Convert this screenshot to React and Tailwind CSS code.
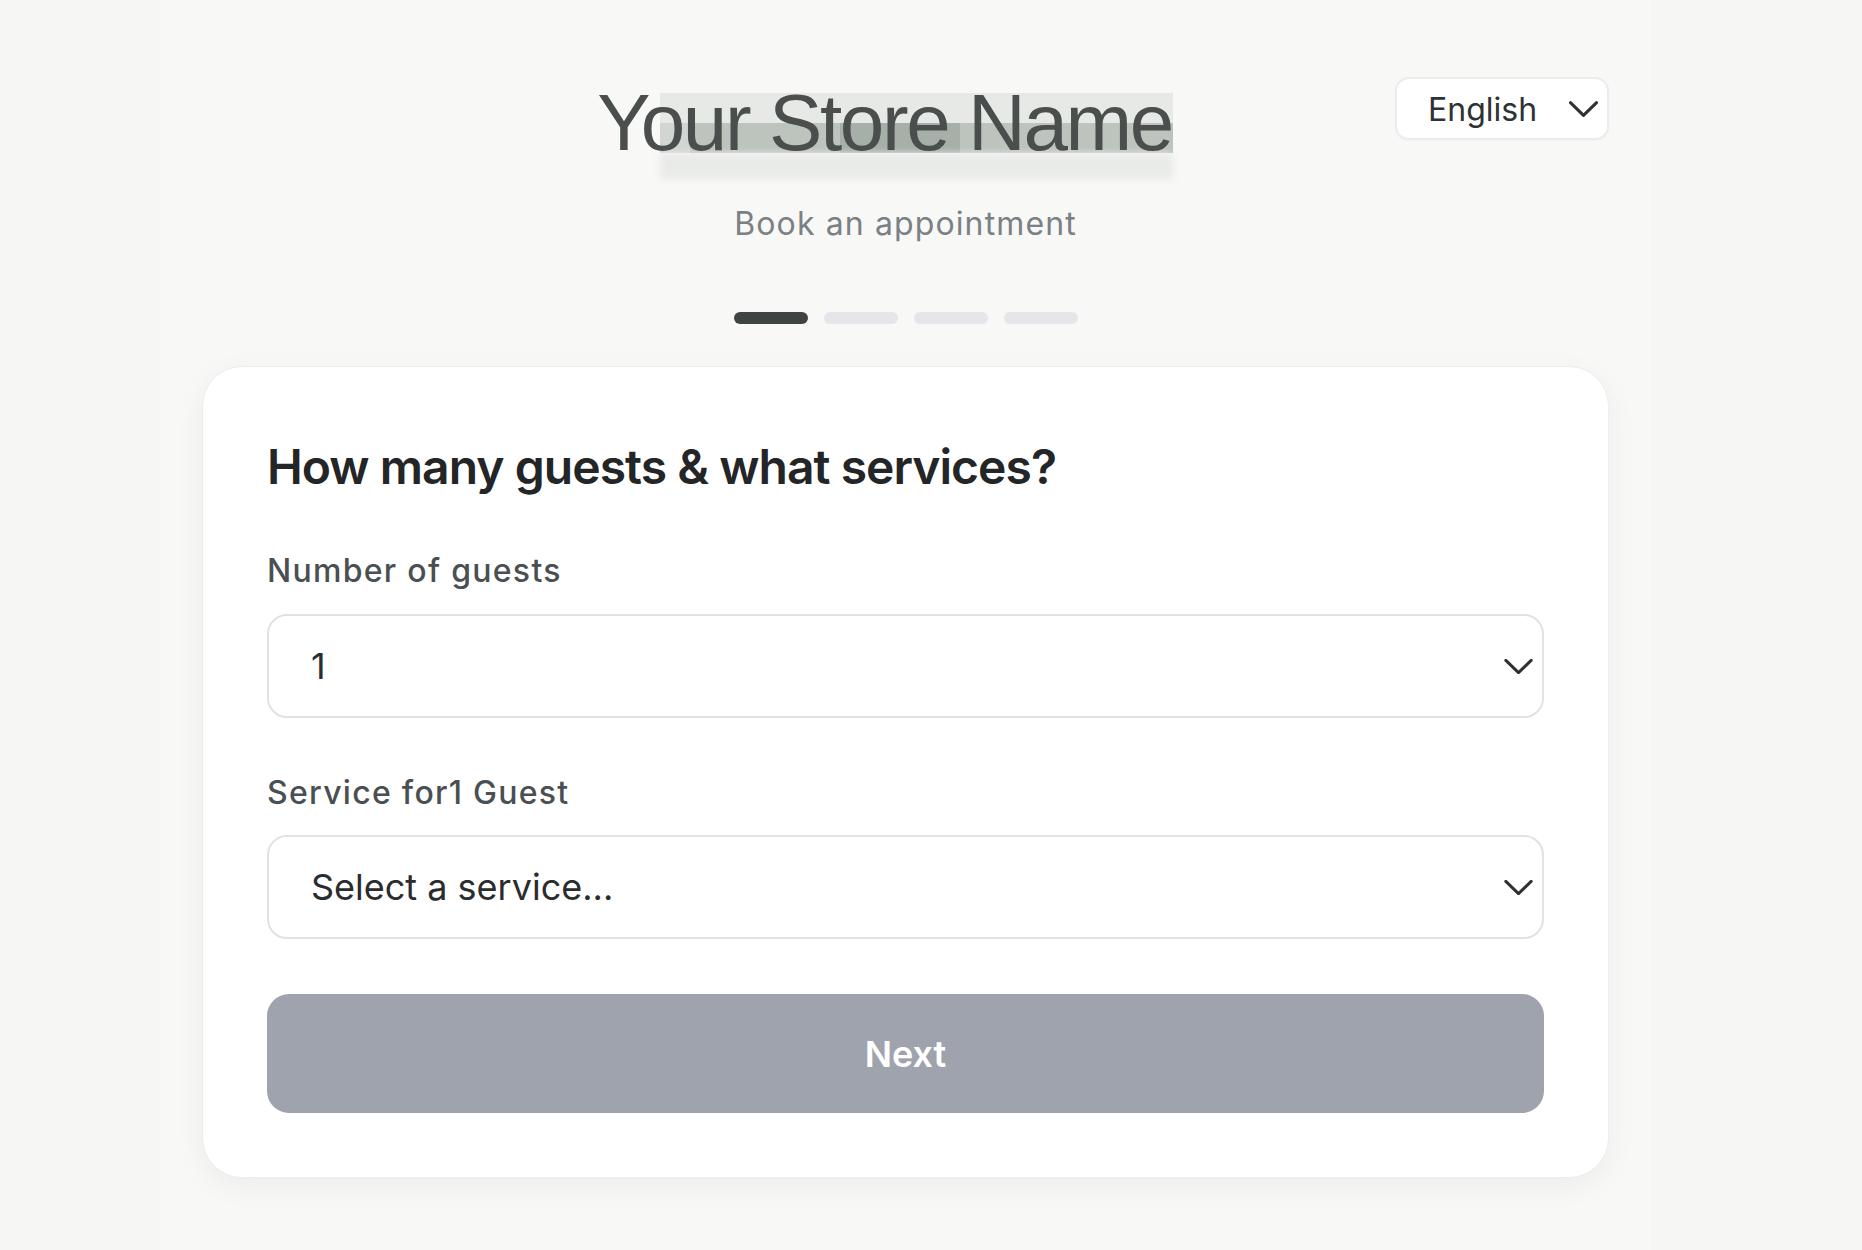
function Chevron({ className = '' }) {
  return (
    <svg viewBox="0 0 30 16" fill="none" className={className}>
      <path d="M1.5 1.5 15 14.5 28.5 1.5" stroke="currentColor" strokeWidth="3.2" strokeLinecap="round" strokeLinejoin="round" />
    </svg>
  )
}

function LanguageSelect() {
  return (
    <button className="flex h-[63px] w-[214px] items-center justify-between rounded-[14px] border-2 border-[#ececec] bg-white pl-[31px] pr-[9px] pt-[3px] text-[32px] leading-none text-[#2f3234] shadow-[0_1px_2px_rgba(0,0,0,0.03)]">
      <span>English</span>
      <Chevron className="-mt-[3px] h-[16px] w-[29px] text-[#2f3234]" />
    </button>
  )
}

function SelectBox({ value, className = '' }) {
  return (
    <div className={`flex h-[104px] items-center justify-between rounded-[20px] border-2 border-[#e2e2e5] bg-white pl-[42px] pr-[9px] ${className}`}>
      <span className="text-[36px] leading-none text-[#2a2c2e]">{value}</span>
      <Chevron className="h-[15px] w-[29px] text-[#2e3032]" />
    </div>
  )
}

export default function App() {
  const steps = [true, false, false, false]

  return (
    <div className="min-h-screen bg-[#f6f6f4] pl-[160px] font-['Inter','Noto_Sans',sans-serif]">
      <div className="min-h-screen w-[1491px] bg-[#f8f8f7] px-[42px] pb-20 pt-[77px]">
        <header className="grid grid-cols-[1fr_auto_1fr]">
          <div />
          <div className="flex flex-col items-center">
            <h1 className="mt-[6px] pr-[42px]">
              <span className="relative inline-block">
                {/* redaction mosaic over the store name */}
                <span className="absolute left-[63px] top-[10px] h-[30px] w-[513px] bg-[#dfe2df]/70" />
                <span className="absolute left-[63px] top-[40px] h-[30px] w-[30px] bg-[#d2d6d2]" />
                <span className="absolute left-[93px] top-[40px] h-[30px] w-[483px] bg-[#bcc4bd]" />
                <span className="absolute left-[243px] top-[40px] h-[30px] w-[120px] bg-[#a6b0a8]" />
                <span className="absolute left-[63px] top-[70px] h-[26px] w-[513px] bg-[#e9ebe9] blur-[3px]" />
                <span className="relative block font-['Liberation_Sans','Arial',sans-serif] text-[80px] leading-[80px] tracking-[-0.03em] text-[#4a4e4d]">
                  Your Store Name
                </span>
              </span>
            </h1>
            <p className="mt-[37px] text-[32px] leading-[48px] tracking-[0.035em] text-[#7a8085]">Book an appointment</p>
          </div>
          <div className="flex items-start justify-end">
            <LanguageSelect />
          </div>
        </header>

        <div className="mt-[64px] flex justify-center gap-4">
          {steps.map((active, i) => (
            <div key={i} className={`h-3 w-[74px] rounded-full ${active ? 'bg-[#3f4443]' : 'bg-[#e5e6ea]'}`} />
          ))}
        </div>

        <section className="mt-[42px] rounded-[40px] border border-[#ededed] bg-white p-16 shadow-[0_8px_30px_rgba(0,0,0,0.05)]">
          <h2 className="text-[48px] font-semibold leading-[72px] tracking-[-0.02em] text-[#232527]">
            How many guests &amp; what services?
          </h2>

          <label className="mt-[44px] block text-[32px] font-medium leading-[48px] tracking-[0.04em] text-[#4a4f52]">
            Number of guests
          </label>
          <SelectBox value="1" className="mt-[19px]" />

          <label className="mt-[51px] block text-[32px] font-medium leading-[48px] tracking-[0.04em] text-[#4a4f52]">
            Service for1 Guest
          </label>
          <SelectBox value="Select a service..." className="mt-[18px]" />

          <button className="mt-[55px] flex h-[119px] w-full items-center justify-center rounded-[22px] bg-[#9ea3ad] text-[36px] font-semibold text-white">
            Next
          </button>
        </section>
      </div>
    </div>
  )
}
